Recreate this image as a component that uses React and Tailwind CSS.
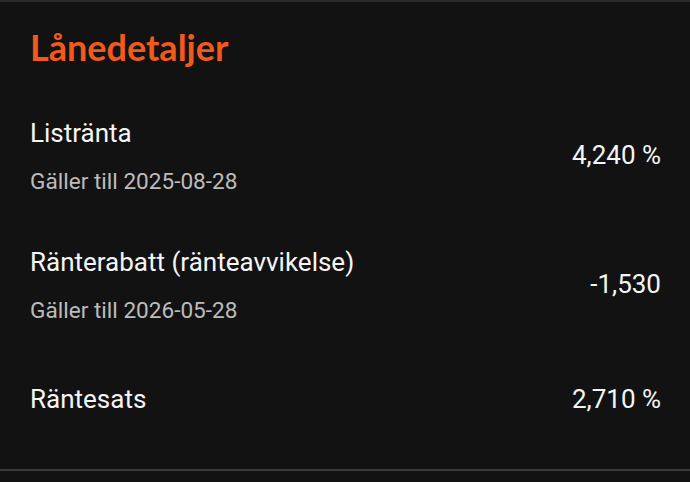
export default function App() {
  const rows = [
    { label: "Listränta", sub: "Gäller till 2025-08-28", value: "4,240 %", gap: "mt-[49px]" },
    { label: "Ränterabatt (ränteavvikelse)", sub: "Gäller till 2026-05-28", value: "-1,530", gap: "mt-[52px]" },
    { label: "Räntesats", sub: null, value: "2,710 %", gap: "mt-[60px]" },
  ];
  return (
    <div className="w-[690px] h-[482px] bg-[#121212] border-t-2 border-[#2a2a2a] overflow-hidden" style={{ fontFamily: "Roboto, sans-serif" }}>
      <div className="px-[30px]">
        <h1 className="pt-[23px] text-[36px] leading-[44px] font-bold text-[#f2591d]" style={{ fontFamily: "Lato, 'Open Sans', sans-serif" }}>
          Lånedetaljer
        </h1>
        {rows.map((r) => (
          <div key={r.label} className={`${r.gap} flex items-center justify-between`}>
            <div className="flex flex-col">
              <span className="text-[26px] leading-[30px] text-[#f5f5f5]">{r.label}</span>
              {r.sub && <span className="mt-[21px] text-[22.6px] leading-[26px] text-[#bcbcbc]">{r.sub}</span>}
            </div>
            <span className={`text-[26px] leading-[30px] text-[#f5f5f5] mr-[-1px] ${r.sub ? "pb-[4px]" : ""}`}>{r.value}</span>
          </div>
        ))}
      </div>
      <div className="mt-[55px] h-[2px] bg-[#3a3a3a]" />
    </div>
  );
}
